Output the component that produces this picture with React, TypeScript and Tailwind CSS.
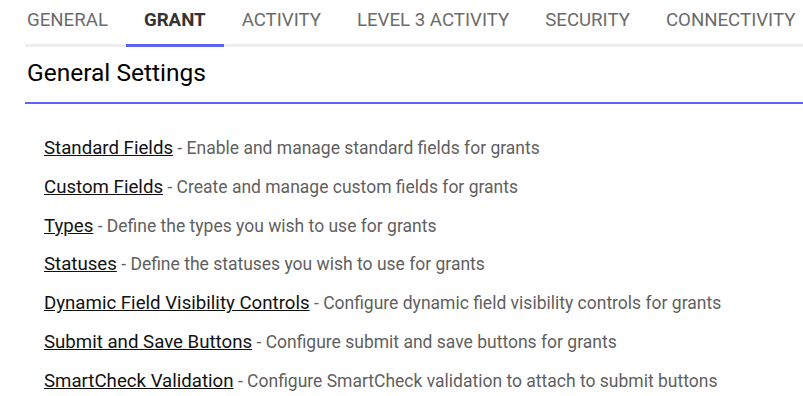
const tabs = ["General", "Grant", "Activity", "Level 3 Activity", "Security", "Connectivity"];

const items = [
  ["Standard Fields", "Enable and manage standard fields for grants"],
  ["Custom Fields", "Create and manage custom fields for grants"],
  ["Types", "Define the types you wish to use for grants"],
  ["Statuses", "Define the statuses you wish to use for grants"],
  ["Dynamic Field Visibility Controls", "Configure dynamic field visibility controls for grants"],
  ["Submit and Save Buttons", "Configure submit and save buttons for grants"],
  ["SmartCheck Validation", "Configure SmartCheck validation to attach to submit buttons"],
];

const App = () => {
  return (
    <div className="pl-[25px] font-['Roboto',sans-serif] overflow-hidden h-[396px] bg-white">
      <div className="flex border-b-[3px] border-[#eeeeee] whitespace-nowrap">
        {tabs.map((t, i) => (
          <div
            key={t}
            className={
              (i === 0 ? "pl-[2px] pr-[18px] " : "px-[18px] ") +
              "pt-[8px] pb-[12px] -mb-[3px] border-b-[3px] uppercase text-[18.67px] leading-[24px] " +
              (i === 1
                ? "border-[#5b63f5] font-bold text-[#333333]"
                : "border-transparent text-[#6b6b6b]")
            }
          >
            {t}
          </div>
        ))}
      </div>

      <h2 className="mt-[10px] pl-[2px] pb-[13px] text-[24.5px] leading-[32px] text-black border-b-2 border-[#5b63f5]">
        General Settings
      </h2>

      <ul className="mt-[25px] pl-[19px] whitespace-nowrap">
        {items.map(([name, desc]) => (
          <li key={name} className="text-[18.67px] leading-[38.8px]">
            <a href="#" className="underline text-[#111111]">
              {name}
            </a>
            <span className="text-[17.5px] text-[#5f5f5f]"> - {desc}</span>
          </li>
        ))}
      </ul>
    </div>
  );
};

export default App;
